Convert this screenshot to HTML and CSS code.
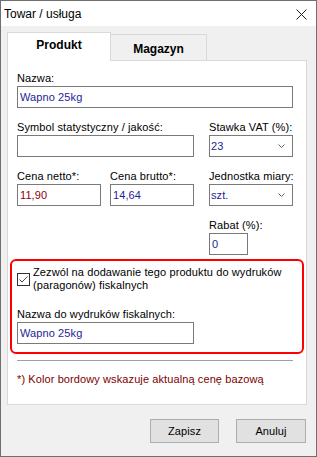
FILE: index.html
```html
<!DOCTYPE html>
<html lang="pl">
<head>
<meta charset="utf-8">
<title>Towar / usługa</title>
<link rel="stylesheet" href="styles.css">
</head>
<body>
<div class="window">
  <div class="titlebar">
    <span class="title">Towar / usługa</span>
    <svg class="close" width="11" height="11" viewBox="0 0 11 11"><path d="M0.5 0.5 L10.5 10.5 M10.5 0.5 L0.5 10.5" stroke="#1a1a1a" stroke-width="1" fill="none"/></svg>
  </div>
  <div class="body">
    <div class="tabs">
      <div class="tab active">Produkt</div>
      <div class="tab">Magazyn</div>
    </div>
    <div class="panel">
      <div class="grid">
        <div class="field span-all">
          <div class="label">Nazwa:</div>
          <div class="input navy">Wapno 25kg</div>
        </div>
        <div class="field span-two">
          <div class="label">Symbol statystyczny / jakość:</div>
          <div class="input"></div>
        </div>
        <div class="field col-three">
          <div class="label">Stawka VAT (%):</div>
          <div class="select navy"><span>23</span><svg width="7" height="4" viewBox="0 0 7 4"><path d="M0.5 0.5 L3.5 3.5 L6.5 0.5" stroke="#606060" fill="none"/></svg></div>
        </div>
        <div class="field col-one">
          <div class="label">Cena netto*:</div>
          <div class="input maroon">11,90</div>
        </div>
        <div class="field col-two">
          <div class="label">Cena brutto*:</div>
          <div class="input navy">14,64</div>
        </div>
        <div class="field col-three">
          <div class="label">Jednostka miary:</div>
          <div class="select navy"><span>szt.</span><svg width="7" height="4" viewBox="0 0 7 4"><path d="M0.5 0.5 L3.5 3.5 L6.5 0.5" stroke="#606060" fill="none"/></svg></div>
        </div>
        <div class="field col-three">
          <div class="label">Rabat (%):</div>
          <div class="input small navy">0</div>
        </div>
      </div>
      <div class="fiscal">
        <div class="check-row">
          <svg class="checkbox" width="13" height="13" viewBox="0 0 13 13"><rect x="0.5" y="0.5" width="12" height="12" fill="#fff" stroke="#333"/><path d="M2.5 6.5 L5 9 L10.5 3.5" stroke="#444" stroke-width="1" fill="none"/></svg>
          <span class="check-text">Zezwól na dodawanie tego produktu do wydruków (paragonów) fiskalnych</span>
        </div>
        <div class="field fiscal-field">
          <div class="label">Nazwa do wydruków fiskalnych:</div>
          <div class="input fiscal-input navy">Wapno 25kg</div>
        </div>
      </div>
      <div class="separator"></div>
      <div class="note">*) Kolor bordowy wskazuje aktualną cenę bazową</div>
    </div>
    <div class="buttons">
      <div class="button save">Zapisz</div>
      <div class="button cancel">Anuluj</div>
    </div>
  </div>
</div>
</body>
</html>
```

FILE: styles.css
```css
* { box-sizing: border-box; }
html, body { margin: 0; padding: 0; background: #fff; }
body {
  font-family: "Liberation Sans", Arial, sans-serif;
  font-size: 11px;
  letter-spacing: 0.1px;
  color: #000;
}
.window {
  width: 317px;
  height: 457px;
  border: 1px solid #6f6f6f;
  display: flex;
  flex-direction: column;
  background: #f0f0f0;
}
.titlebar {
  height: 25px;
  background: #fff;
  display: flex;
  align-items: center;
  justify-content: space-between;
  padding: 0 9px 0 3px;
}
.title { font-size: 12px; line-height: 14px; letter-spacing: 0; }
.close { display: block; margin-top: 1px; }
.body {
  flex: 1;
  padding: 6px 9px 0 6px;
  display: flex;
  flex-direction: column;
}
.tabs {
  display: flex;
  align-items: flex-end;
  height: 28px;
}
.tab {
  font-weight: bold;
  font-size: 12px;
  line-height: 14px;
  letter-spacing: 0;
  text-align: center;
  border: 1px solid #d9d9d9;
  border-bottom: none;
}
.tab.active {
  width: 104px;
  height: 29px;
  margin-bottom: -1px;
  background: #fff;
  padding-top: 5px;
  position: relative;
  z-index: 1;
}
.tab:not(.active) {
  width: 97px;
  height: 26px;
  margin-left: -1px;
  background: #f0f0f0;
  padding-top: 7px;
}
.panel {
  height: 345px;
  background: #fff;
  border: 1px solid #d9d9d9;
  padding: 10px 13px 0 9px;
}
.grid {
  display: grid;
  grid-template-columns: 84px 9px 84px 15px 84px;
  row-gap: 12px;
}
.span-all { grid-column: 1 / 6; }
.span-two { grid-column: 1 / 4; }
.col-one { grid-column: 1 / 2; }
.col-two { grid-column: 3 / 4; }
.col-three { grid-column: 5 / 6; }
.label {
  line-height: 14px;
  height: 14px;
  margin-bottom: 1px;
  white-space: nowrap;
}
.input, .select {
  height: 22px;
  border: 1px solid #7a7a7a;
  background: #fff;
  line-height: 20px;
  padding-left: 2px;
  white-space: nowrap;
}
.select {
  display: flex;
  align-items: center;
  justify-content: space-between;
  padding: 0 7px 0 1px;
}
.select svg { display: block; }
.input.small { width: 39px; }
.navy { color: #1e1e96; }
.maroon { color: #8a0010; }
.fiscal {
  margin: 4px -11px 0 -7px;
  border: 2px solid #f00;
  border-radius: 6px;
  padding: 5px 0 8px 5px;
}
.check-row {
  display: flex;
  align-items: center;
  gap: 3px;
}
.checkbox { display: block; flex: none; }
.check-text {
  line-height: 13px;
  width: 262px;
}
.fiscal-field { margin-top: 15px; }
.fiscal-input { width: 177px; }
.separator {
  margin-top: 6px;
  height: 1px;
  background: #a0a0a0;
}
.note {
  margin-top: 11px;
  line-height: 14px;
  color: #800000;
}
.buttons {
  margin-top: 14px;
  display: flex;
  justify-content: flex-end;
  gap: 17px;
  padding-right: 1px;
}
.button {
  height: 24px;
  border: 1px solid #adadad;
  background: #e1e1e1;
  text-align: center;
  line-height: 22px;
}
.save { width: 69px; }
.cancel { width: 70px; }
```
